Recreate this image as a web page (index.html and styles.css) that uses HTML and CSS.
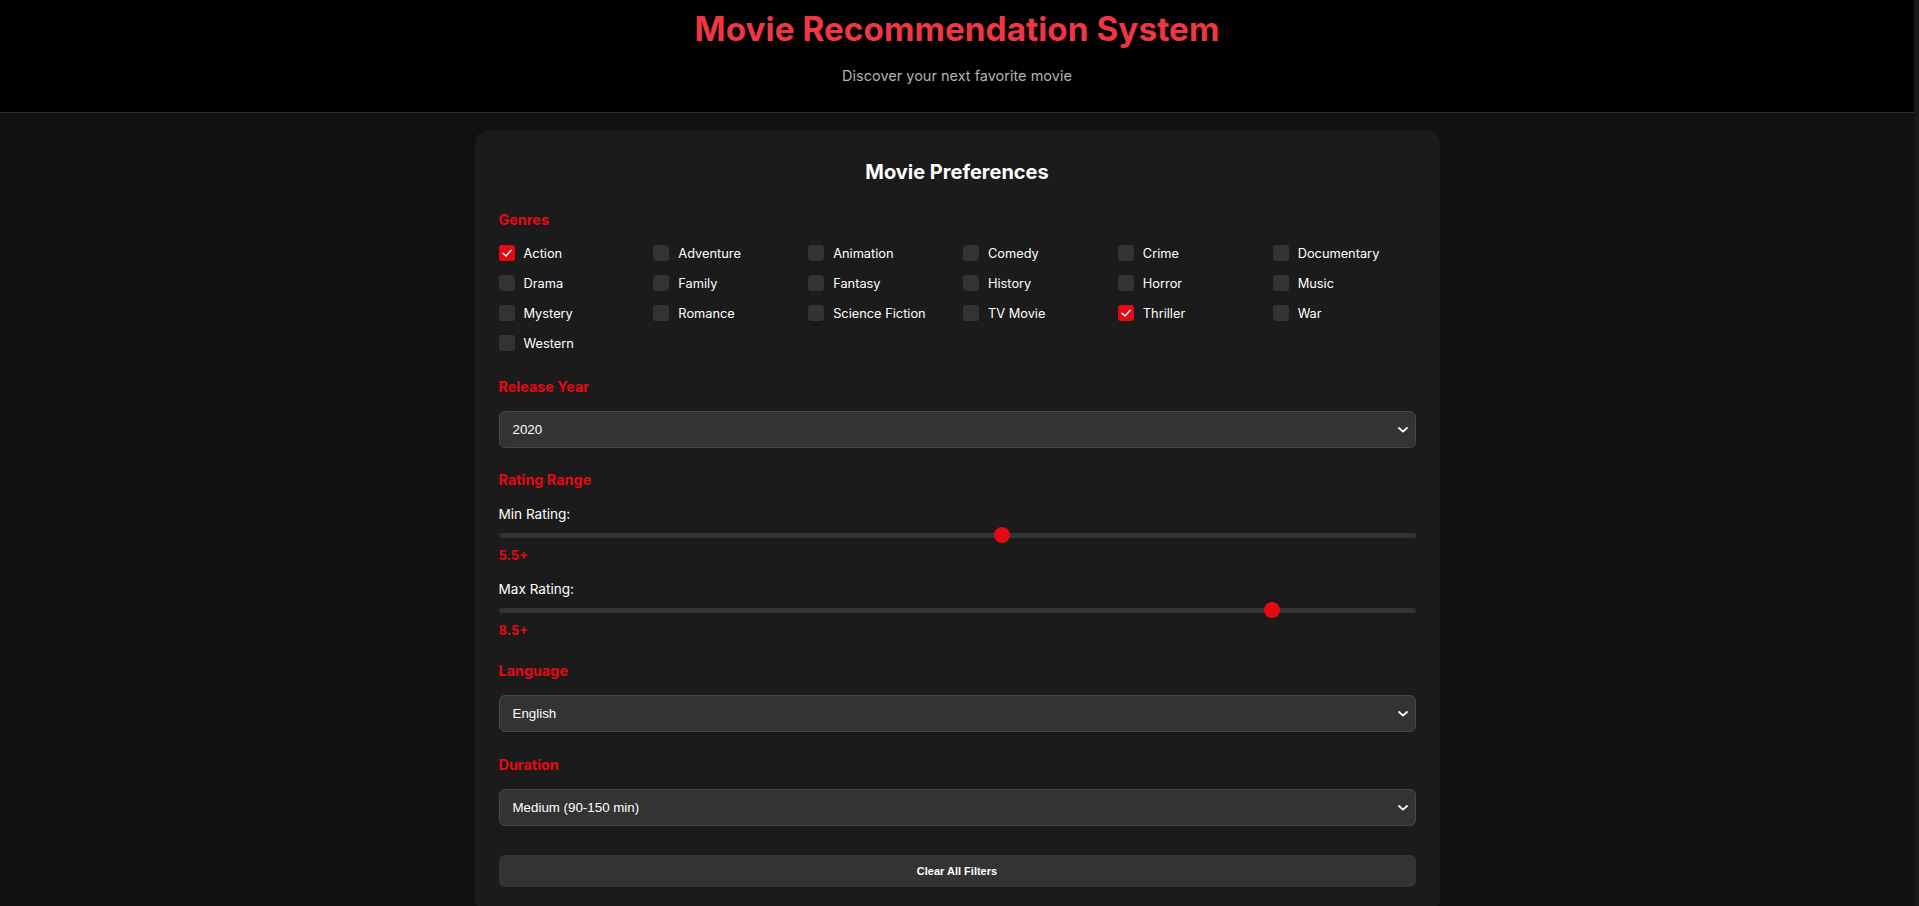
FILE: index.html
```html
<!DOCTYPE html>
<html lang="en">
<head>
<meta charset="utf-8">
<title>Movie Recommendation System</title>
<link rel="stylesheet" href="styles.css">
</head>
<body>
<header class="site-header">
  <h1 class="site-title">Movie Recommendation System</h1>
  <p class="site-subtitle">Discover your next favorite movie</p>
</header>

<main class="main">
  <section class="card">
    <h2 class="card-title">Movie Preferences</h2>

    <div class="section section-genres">
      <h3 class="section-label">Genres</h3>
      <div class="genre-grid">
        <label class="genre"><span class="box checked"><svg viewBox="0 0 16 16" width="16" height="16"><polyline points="4,8.2 7,11 12.2,5.2" fill="none" stroke="#fff" stroke-width="1.4" stroke-linecap="round" stroke-linejoin="round"/></svg></span>Action</label>
        <label class="genre"><span class="box"></span>Adventure</label>
        <label class="genre"><span class="box"></span>Animation</label>
        <label class="genre"><span class="box"></span>Comedy</label>
        <label class="genre"><span class="box"></span>Crime</label>
        <label class="genre"><span class="box"></span>Documentary</label>
        <label class="genre"><span class="box"></span>Drama</label>
        <label class="genre"><span class="box"></span>Family</label>
        <label class="genre"><span class="box"></span>Fantasy</label>
        <label class="genre"><span class="box"></span>History</label>
        <label class="genre"><span class="box"></span>Horror</label>
        <label class="genre"><span class="box"></span>Music</label>
        <label class="genre"><span class="box"></span>Mystery</label>
        <label class="genre"><span class="box"></span>Romance</label>
        <label class="genre"><span class="box"></span>Science Fiction</label>
        <label class="genre"><span class="box"></span>TV Movie</label>
        <label class="genre"><span class="box checked"><svg viewBox="0 0 16 16" width="16" height="16"><polyline points="4,8.2 7,11 12.2,5.2" fill="none" stroke="#fff" stroke-width="1.4" stroke-linecap="round" stroke-linejoin="round"/></svg></span>Thriller</label>
        <label class="genre"><span class="box"></span>War</label>
        <label class="genre"><span class="box"></span>Western</label>
      </div>
    </div>

    <div class="section">
      <h3 class="section-label">Release Year</h3>
      <div class="select-wrap">
        <select class="select"><option>2020</option></select>
        <svg class="chevron" viewBox="0 0 10 6" width="10" height="6"><polyline points="1,1 5,4.6 9,1" fill="none" stroke="#fff" stroke-width="1.8" stroke-linecap="round" stroke-linejoin="round"/></svg>
      </div>
    </div>

    <div class="section section-rating">
      <h3 class="section-label">Rating Range</h3>
      <div class="rating">
        <label class="rating-label">Min Rating:</label>
        <input class="range" type="range" min="0" max="10" step="0.5" value="5.5">
        <div class="rating-value">5.5+</div>
      </div>
      <div class="rating rating-last">
        <label class="rating-label">Max Rating:</label>
        <input class="range" type="range" min="0" max="10" step="0.5" value="8.5">
        <div class="rating-value">8.5+</div>
      </div>
    </div>

    <div class="section section-language">
      <h3 class="section-label">Language</h3>
      <div class="select-wrap">
        <select class="select"><option>English</option></select>
        <svg class="chevron" viewBox="0 0 10 6" width="10" height="6"><polyline points="1,1 5,4.6 9,1" fill="none" stroke="#fff" stroke-width="1.8" stroke-linecap="round" stroke-linejoin="round"/></svg>
      </div>
    </div>

    <div class="section section-duration">
      <h3 class="section-label">Duration</h3>
      <div class="select-wrap">
        <select class="select"><option>Medium (90-150 min)</option></select>
        <svg class="chevron" viewBox="0 0 10 6" width="10" height="6"><polyline points="1,1 5,4.6 9,1" fill="none" stroke="#fff" stroke-width="1.8" stroke-linecap="round" stroke-linejoin="round"/></svg>
      </div>
    </div>

    <button class="clear-btn" type="button">Clear All Filters</button>
  </section>

  <section class="results">
    <h2 class="results-title">Recommended Movies</h2>
    <div class="results-grid"></div>
  </section>
</main>
</body>
</html>
```

FILE: styles.css
```css
* { box-sizing: border-box; }

html { background: #1a1a1a; }

::-webkit-scrollbar { width: 5px; }
::-webkit-scrollbar-track { background: #1a1a1a; }
::-webkit-scrollbar-thumb { background: #333333; }

body {
  margin: 0;
  padding-right: 5px;
  background: #1a1a1a;
  color: #ffffff;
  font-family: Inter, "Noto Sans", sans-serif;
}

.site-header {
  background: #000000;
  border-bottom: 1px solid #2e2e2e;
  text-align: center;
  padding: 9px 0 25px;
}

.site-title {
  margin: 0 0 16px;
  font-size: 33.4px;
  line-height: 40px;
  font-weight: 700;
  color: #ef3743;
}

.site-subtitle {
  margin: 0;
  font-size: 14.5px;
  line-height: 22px;
  color: #b3b3b3;
}

.main {
  background: #111111;
  padding-top: 18px;
  display: flex;
  flex-direction: column;
  align-items: center;
}

.card {
  width: 965px;
  background: #1b1b1b;
  border-radius: 12px;
  padding: 24px;
}

.card-title {
  margin: 0 0 19px;
  text-align: center;
  font-size: 20px;
  line-height: 34px;
  font-weight: 700;
  color: #ffffff;
}

.section { margin-bottom: 20px; }
.section-genres { margin-bottom: 23px; }
.section-rating { margin-bottom: 19px; }
.section-language { margin-bottom: 21px; }
.section-duration { margin-bottom: 29px; }

.section-label {
  margin: 0 0 12px;
  font-size: 14.4px;
  line-height: 24px;
  font-weight: 700;
  color: #e50914;
}

.genre-grid {
  display: grid;
  grid-template-columns: repeat(6, 1fr);
  column-gap: 12px;
  row-gap: 12px;
}

.genre {
  display: flex;
  align-items: center;
  gap: 9px;
  height: 18px;
  font-size: 12.8px;
  color: #ffffff;
}

.box {
  width: 16px;
  height: 16px;
  border-radius: 3px;
  background: #333333;
  flex: none;
  display: flex;
}

.box.checked { background: #e50914; }

.select-wrap { position: relative; }

.select {
  display: block;
  width: 100%;
  height: 37px;
  -webkit-appearance: none;
  appearance: none;
  background: #333333;
  border: 1px solid #464646;
  border-radius: 6px;
  color: #ffffff;
  font-family: "Liberation Sans", Arial, sans-serif;
  font-size: 13.333px;
  padding: 0 30px 0 13px;
  outline: none;
}

.chevron {
  position: absolute;
  right: 8px;
  top: 16px;
  pointer-events: none;
}

.rating { margin-bottom: 14px; }
.rating-last { margin-bottom: 0; }

.rating-label {
  display: block;
  font-size: 13.6px;
  line-height: 20px;
  color: #ffffff;
  margin-bottom: 3px;
}

.range {
  display: block;
  width: 100%;
  height: 16px;
  margin: 0;
  -webkit-appearance: none;
  appearance: none;
  background: transparent;
}

.range::-webkit-slider-runnable-track {
  height: 5px;
  background: #333333;
  border-radius: 3px;
}

.range::-webkit-slider-thumb {
  -webkit-appearance: none;
  width: 16px;
  height: 16px;
  border-radius: 50%;
  background: #e50914;
  border: none;
  margin-top: -5.5px;
}

.rating-value {
  margin-top: 2px;
  font-size: 13px;
  line-height: 20px;
  font-weight: 700;
  color: #e50914;
}

.clear-btn {
  display: block;
  width: 100%;
  height: 32px;
  border: none;
  border-radius: 6px;
  background: #333333;
  color: #ffffff;
  font-family: "Liberation Sans", Arial, sans-serif;
  font-size: 11px;
  font-weight: 700;
}

.results {
  width: 965px;
  padding-top: 32px;
  min-height: 4900px;
}

.results-title {
  margin: 0;
  font-size: 20px;
  font-weight: 700;
  color: #ffffff;
  text-align: center;
}
```
